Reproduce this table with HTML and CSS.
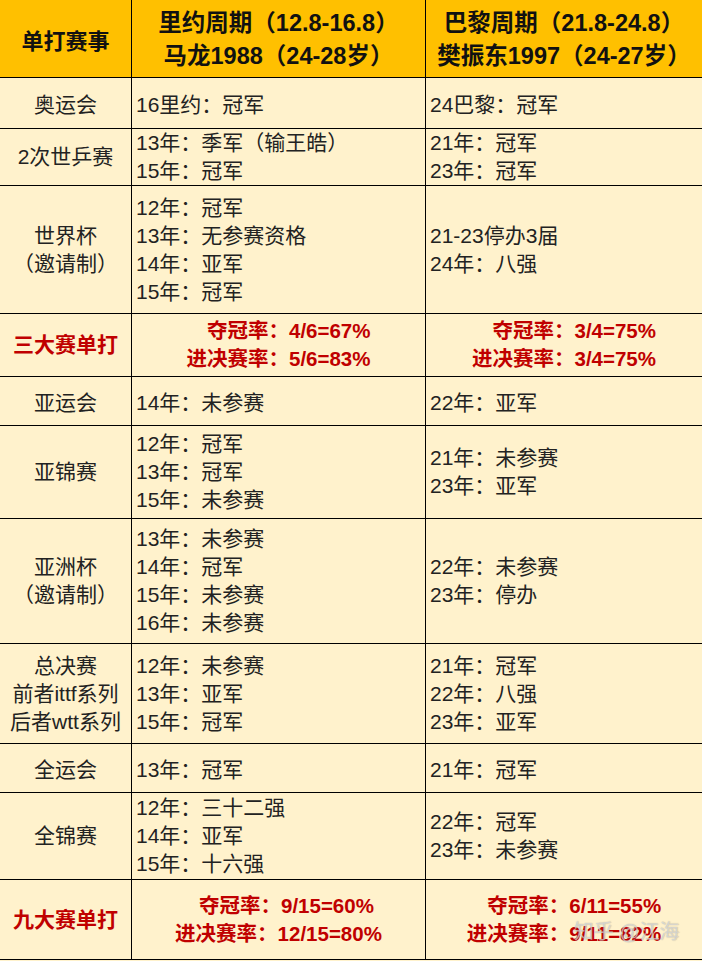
FILE: index.html
```html
<!DOCTYPE html>
<html lang="zh-CN">
<head>
<meta charset="utf-8">
<title>马龙 vs 樊振东 单打赛事</title>
<link rel="stylesheet" href="styles.css">
</head>
<body>
<div class="sheet">
  <div class="cell head first">单打赛事</div>
  <div class="cell head"><span>里约周期（12.8-16.8）</span><span>马龙1988（24-28岁）</span></div>
  <div class="cell head"><span>巴黎周期（21.8-24.8）</span><span>樊振东1997（24-27岁）</span></div>

  <div class="cell name one">奥运会</div>
  <div class="cell list one"><span>16里约：冠军</span></div>
  <div class="cell list one"><span>24巴黎：冠军</span></div>

  <div class="cell name">2次世乒赛</div>
  <div class="cell list"><span>13年：季军（输王皓）</span><span>15年：冠军</span></div>
  <div class="cell list"><span>21年：冠军</span><span>23年：冠军</span></div>

  <div class="cell name"><span>世界杯</span><span>（邀请制）</span></div>
  <div class="cell list"><span>12年：冠军</span><span>13年：无参赛资格</span><span>14年：亚军</span><span>15年：冠军</span></div>
  <div class="cell list"><span>21-23停办3届</span><span>24年：八强</span></div>

  <div class="cell name red">三大赛单打</div>
  <div class="cell rate"><div class="rate-box"><span>夺冠率：4/6=67%</span><span>进决赛率：5/6=83%</span></div></div>
  <div class="cell rate"><div class="rate-box"><span>夺冠率：3/4=75%</span><span>进决赛率：3/4=75%</span></div></div>

  <div class="cell name one">亚运会</div>
  <div class="cell list one"><span>14年：未参赛</span></div>
  <div class="cell list one"><span>22年：亚军</span></div>

  <div class="cell name">亚锦赛</div>
  <div class="cell list"><span>12年：冠军</span><span>13年：冠军</span><span>15年：未参赛</span></div>
  <div class="cell list"><span>21年：未参赛</span><span>23年：亚军</span></div>

  <div class="cell name"><span>亚洲杯</span><span>（邀请制）</span></div>
  <div class="cell list"><span>13年：未参赛</span><span>14年：冠军</span><span>15年：未参赛</span><span>16年：未参赛</span></div>
  <div class="cell list"><span>22年：未参赛</span><span>23年：停办</span></div>

  <div class="cell name"><span>总决赛</span><span>前者ittf系列</span><span>后者wtt系列</span></div>
  <div class="cell list"><span>12年：未参赛</span><span>13年：亚军</span><span>15年：冠军</span></div>
  <div class="cell list"><span>21年：冠军</span><span>22年：八强</span><span>23年：亚军</span></div>

  <div class="cell name one">全运会</div>
  <div class="cell list one"><span>13年：冠军</span></div>
  <div class="cell list one"><span>21年：冠军</span></div>

  <div class="cell name">全锦赛</div>
  <div class="cell list"><span>12年：三十二强</span><span>14年：亚军</span><span>15年：十六强</span></div>
  <div class="cell list"><span>22年：冠军</span><span>23年：未参赛</span></div>

  <div class="cell name red">九大赛单打</div>
  <div class="cell rate"><div class="rate-box"><span class="nudge">夺冠率：9/15=60%</span><span>进决赛率：12/15=80%</span></div></div>
  <div class="cell rate"><div class="rate-box"><span>夺冠率：6/11=55%</span><span>进决赛率：9/11=82%</span></div></div>
</div>
<div class="watermark">知乎 @江海</div>
</body>
</html>
```

FILE: styles.css
```css
html, body {
  margin: 0;
  padding: 0;
  background: #fff2cc;
}

body {
  width: 702px;
  height: 961px;
  overflow: hidden;
  position: relative;
  font-family: "Liberation Sans", "Noto Sans CJK SC", sans-serif;
  color: #222;
}

.sheet {
  display: grid;
  grid-template-columns: 131px 293px 276px;
  grid-template-rows: 77px 50px 56px 127px 62px 48px 92px 124px 99px 48px 86px 79px;
  gap: 1px;
  background: #000;
  border-bottom: 1px solid #000;
  width: 702px;
}

.cell {
  background: #fff2cc;
  display: flex;
  flex-direction: column;
  justify-content: center;
  font-size: 21px;
  line-height: 28px;
}

.cell.one {
  padding-top: 4px;
}

.head {
  background: #ffc000;
  align-items: center;
  font-weight: bold;
  font-size: 23.5px;
  line-height: 33px;
  color: #111;
  padding-top: 2px;
}

.head.first {
  font-size: 22px;
  padding-top: 5px;
}

.name {
  align-items: center;
  text-align: center;
  white-space: nowrap;
}

.name.red {
  color: #c00000;
  font-weight: bold;
}

.list {
  padding-left: 4px;
  white-space: nowrap;
}

.rate {
  align-items: center;
  color: #c00000;
  font-weight: bold;
  font-size: 20.5px;
}

.rate-box {
  display: flex;
  flex-direction: column;
  align-items: flex-end;
  white-space: nowrap;
}

.nudge {
  margin-right: 8px;
}

.watermark {
  position: absolute;
  left: 574px;
  top: 920px;
  font-size: 20px;
  line-height: 24px;
  color: rgba(255, 255, 255, 0.55);
  text-shadow: 0 0 1px rgba(90, 90, 90, 0.6);
  white-space: nowrap;
}
```
